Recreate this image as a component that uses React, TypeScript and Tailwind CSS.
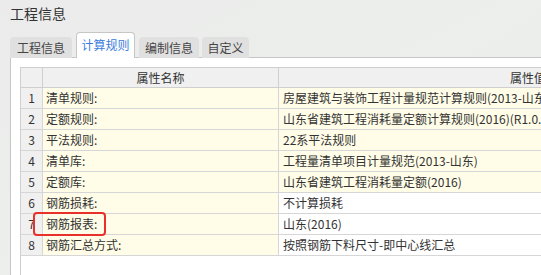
const rows = [
  { no: 1, name: '清单规则:', value: '房屋建筑与装饰工程计量规范计算规则(2013-山东)', hl: true },
  { no: 2, name: '定额规则:', value: '山东省建筑工程消耗量定额计算规则(2016)(R1.0.39.6)', hl: true },
  { no: 3, name: '平法规则:', value: '22系平法规则', hl: true },
  { no: 4, name: '清单库:', value: '工程量清单项目计量规范(2013-山东)', hl: true },
  { no: 5, name: '定额库:', value: '山东省建筑工程消耗量定额(2016)', hl: true },
  { no: 6, name: '钢筋损耗:', value: '不计算损耗', hl: false },
  { no: 7, name: '钢筋报表:', value: '山东(2016)', hl: false },
  { no: 8, name: '钢筋汇总方式:', value: '按照钢筋下料尺寸-即中心线汇总', hl: false },
]

const tabs = [
  { label: '工程信息', w: 'w-[62px]' },
  { label: '计算规则', w: 'w-[59px]', active: true },
  { label: '编制信息', w: 'w-[60px]' },
  { label: '自定义', w: 'w-[47px]' },
]

export default function App() {
  return (
    <div
      className="relative w-[541px] h-[275px] overflow-hidden flex flex-col bg-gradient-to-br from-[#ebebeb] via-[#ecefec] to-[#eaeaea] text-[#333]"
      style={{ fontFamily: '"Noto Sans CJK SC", "Noto Sans", sans-serif' }}
    >
      {/* Title */}
      <div className="h-[33px] pl-[10px] pt-[4px] text-[14px] leading-[18px] text-[#333]">工程信息</div>

      {/* Tabs */}
      <div className="relative z-10 flex items-end h-[25px] pl-[10px] -mb-px">
        {tabs.map((t, i) => (
          <div
            key={t.label}
            className={
              t.active
                ? `${t.w} h-[26px] mr-[4px] bg-white border border-b-0 border-[#c6c6c6] rounded-t-[4px] text-center text-[12px] leading-[24px] text-[#3b7ddd]`
                : `${t.w} h-[21px] ${i === 2 ? 'mr-[3px]' : 'mr-[4px]'} bg-[#e0e0e0] rounded-t-[4px] text-center text-[12px] leading-[22px] text-[#444]`
            }
          >
            {t.label}
          </div>
        ))}
      </div>

      {/* Panel */}
      <div className="flex-1 ml-[10px] bg-white border-l border-t border-[#c6c6c6] pt-[9px] pl-[9px] flex flex-col">
        <div className="flex-1 border-l border-t border-[#cfcfcf] flex flex-col w-[800px]">
          {/* Header */}
          <div className="flex h-[20px] bg-[#f0f0f0] border-b border-[#cfcfcf] text-[12px] leading-[19px]">
            <div className="w-[22px] shrink-0 border-r border-[#cfcfcf]" />
            <div className="w-[236px] shrink-0 border-r border-[#cfcfcf] text-center">属性名称</div>
            <div className="w-[498px] shrink-0 text-center">属性值</div>
          </div>

          {rows.map((r) => (
            <div key={r.no} className="flex h-[21px] border-b border-[#d6d6d6] text-[12px] leading-[20px]">
              <div className="w-[22px] shrink-0 bg-[#f0f0f0] border-r border-[#d6d6d6] text-center">{r.no}</div>
              <div className="w-[236px] shrink-0 bg-[#fffde8] border-r border-[#d6d6d6] pl-[3px] whitespace-nowrap">
                {r.name}
              </div>
              <div className={`w-[498px] shrink-0 pl-[4px] whitespace-nowrap overflow-hidden ${r.hl ? 'bg-[#fffde8]' : 'bg-white'}`}>
                {r.value}
              </div>
            </div>
          ))}
        </div>
      </div>

      {/* Highlight box */}
      <div className="absolute left-[33px] top-[212px] w-[73px] h-[24px] border-2 border-[#e8312a] rounded-[4px]" />
    </div>
  )
}
